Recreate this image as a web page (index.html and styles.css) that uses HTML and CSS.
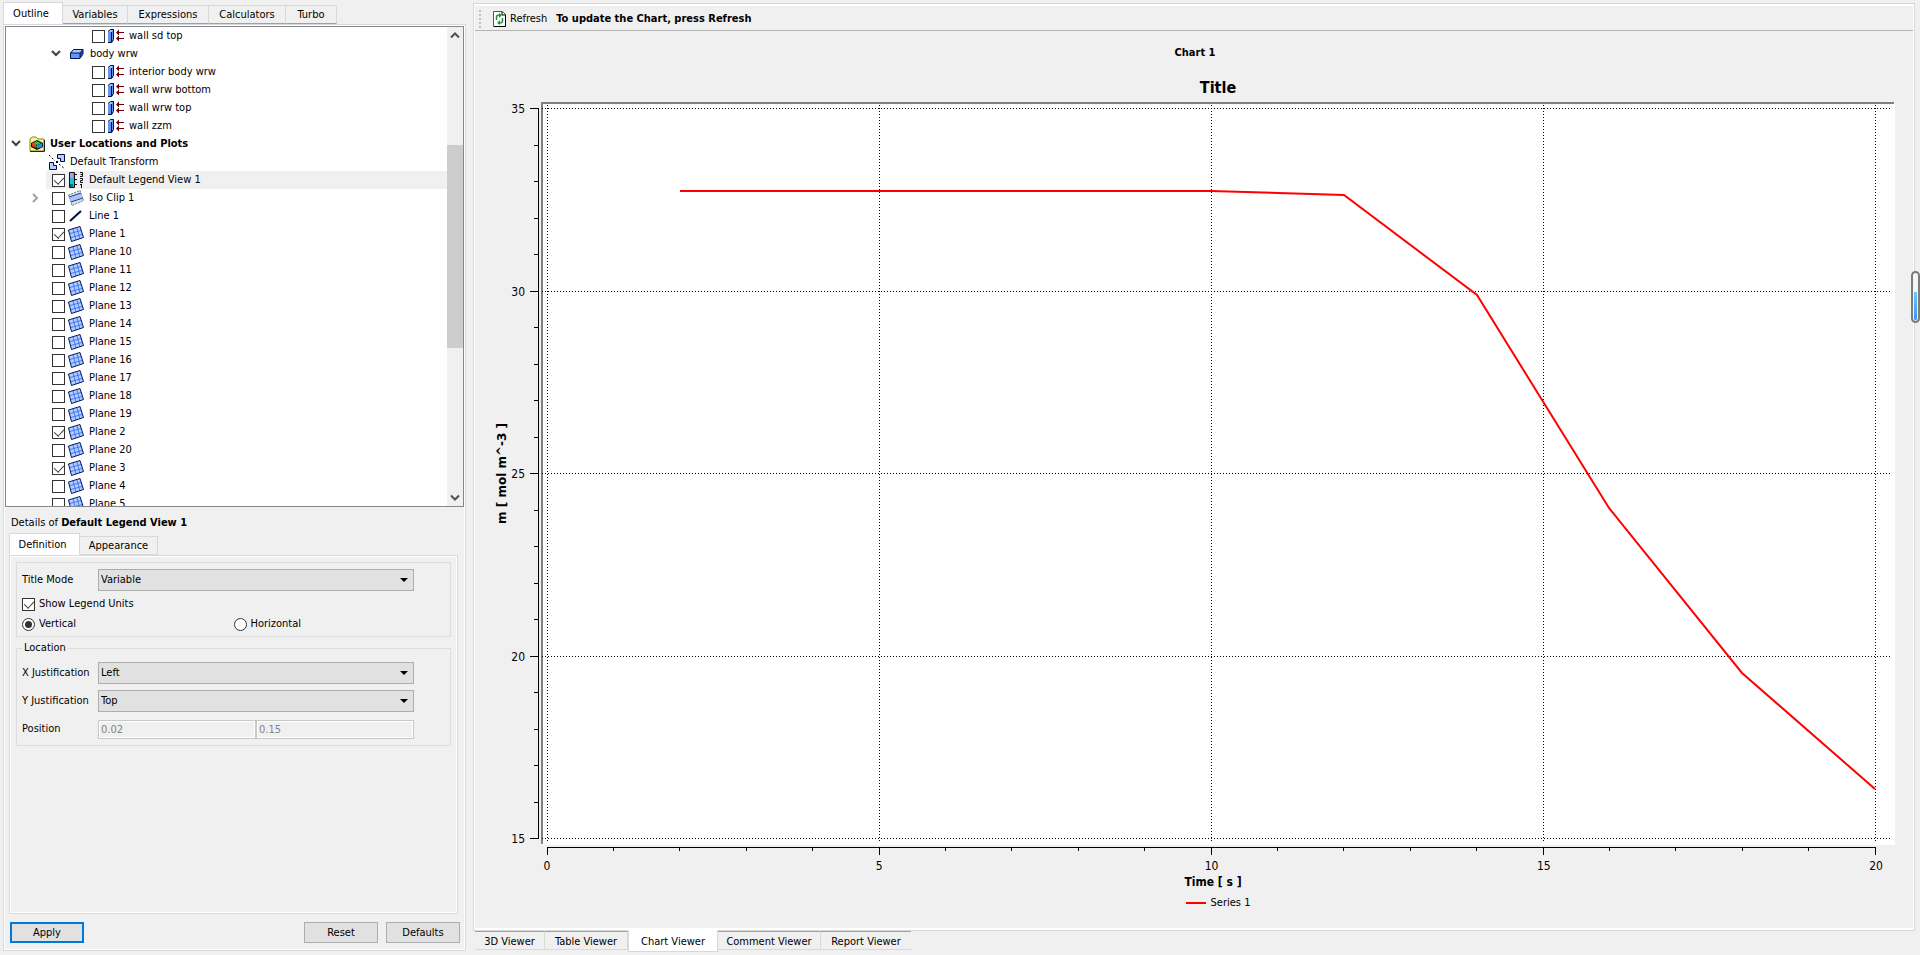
FILE: index.html
```
<!DOCTYPE html>
<html lang="en">
<head>
<meta charset="utf-8">
<title>Chart Viewer</title>
<link rel="stylesheet" href="styles.css">
</head>
<body>
<svg class="sprites" aria-hidden="true">
  <symbol id="chevron-down" viewBox="0 0 20 18"><path d="M6 6l4 4 4-4" fill="none" stroke="#404040" stroke-width="2"/></symbol>
  <symbol id="chevron-right" viewBox="0 0 20 18"><path d="M7 5l4 4-4 4" fill="none" stroke="#a0a0a0" stroke-width="2"/></symbol>
  <symbol id="boundary" viewBox="0 0 16 16">
    <path d="M0 4L3 1h3v10l-2 4H0z" fill="#5f93f5"/><path d="M0 4L3 1h2L4 4z" fill="#9cc0ff"/>
    <path d="M0 3.500L2.500 1.500H5.500v10l-2 3H0M3.500 14V4" fill="none" stroke="#001038"/>
    <path d="M9 4.500h7M9 10.500h7" stroke="#6b0008"/><path d="M8 4.500l3-3v6zM8 10.500l3-3v6z" fill="#6b0008"/>
  </symbol>
  <symbol id="body" viewBox="0 0 16 16">
    <path d="M1 7l4-4h9v5l-3 4H1z" fill="#6495ff"/><path d="M1 7l4-4h9l-3 4z" fill="#a9c6ff"/><path d="M11 7l3-4v5l-3 4z" fill="#2850b8"/>
    <path d="M1.500 7l3-3.500h9.500V8l-3 4.500H1.500zM1.500 7H11v5M11 7l3-3.500" fill="none" stroke="#001850"/>
  </symbol>
  <symbol id="folder" viewBox="0 0 16 16">
    <path d="M1 15V3l2-2h4l2 2h6v12z" fill="#f7f29a" stroke="#8b8500"/><path d="M1 15.500h14.500V4" fill="none" stroke="#222" />
    <path d="M2 7l6-3 6 3v4l-6 3-6-3z" fill="#111"/><path d="M3 7l4-1v6l-4-2z" fill="#f03820"/><path d="M7 5l5 2-3 2-4-1z" fill="#20c850"/><path d="M9 9l4-2v4l-4 1z" fill="#1890f0"/><path d="M7 10l2-1v4z" fill="#20c850"/>
  </symbol>
  <symbol id="transform" viewBox="0 0 16 16">
    <path d="M.5 8.500h4v3h3v4h-7zM8.500 .5h7v7h-4v-3h-3z" fill="#b8cdfd" stroke="#000c40"/>
    <path d="M0 1l6 6M10 10l6 5" fill="none" stroke="#000" stroke-dasharray="2 2"/><path d="M7 7h2v2H7z" fill="#000"/>
  </symbol>
  <symbol id="legend" viewBox="0 0 16 16">
    <path d="M1.500 .5h5v15h-5z" fill="#18c4d2" stroke="#111"/><path d="M2 1h3v5H2z" fill="#b4a0d8"/><path d="M2 12h3v3H2z" fill="#087080"/>
    <path d="M7 2.500h2M7 7.500h2M7 12.500h2" stroke="#111"/>
    <path d="M12 .5h2.500v4H12M12.500 2.500h2M12 6.500h2.500v2h-2v2H15M13.500 12v4M12 12.500h1" fill="none" stroke="#111"/>
  </symbol>
  <symbol id="isoclip" viewBox="0 0 16 16">
    <path d="M.5 5L12 .5l3.500 10L4 15.500z" fill="#d5e0f3" stroke="#778" stroke-dasharray="2 1"/>
    <path d="M1 7l12-4 2 5L3 12z" fill="#a8c4fa"/><path d="M1 7L13 3M3 12l12-4" stroke="#203f85"/>
  </symbol>
  <symbol id="line" viewBox="0 0 16 16"><path d="M2 13L13 3" stroke="#001038" stroke-width="2"/></symbol>
  <symbol id="plane" viewBox="0 0 16 16">
    <path d="M.5 4L12 .5l3.500 11L3.500 15.500z" fill="#b3cbff"/>
    <path d="M2 7.500l11-3M3 11.500l11-3M5 3l3 11M9 2l3 11" fill="none" stroke="#417bf5"/>
    <path d="M.5 4L12 .5l3.500 11L3.500 15.500z" fill="none" stroke="#001860"/>
  </symbol>
  <symbol id="refresh" viewBox="0 0 14 16">
    <path d="M.5 .5h9l3 3v12H.5z" fill="#fff" stroke="#555"/><path d="M9 1v3h4M12.500 4v11.500H1" fill="none" stroke="#000"/>
    <path d="M3.500 9V6q0-2 3-2M9.500 7v3q0 2-3 2" fill="none" stroke="#1b9440" stroke-width="1.500"/><path d="M6 2l3 2-3 3zM7 9l-3 3 3 2z" fill="#1b9440"/>
  </symbol>
</svg>

<main class="window">
  <section class="side">
    <nav class="tabs">
      <button class="tab active">Outline</button><button class="tab">Variables</button><button class="tab">Expressions</button><button class="tab">Calculators</button><button class="tab">Turbo</button>
    </nav>
    <div class="side-pane">
      <div class="tree">
        <div class="tree-rows" id="tree"></div>
        <div class="scrollbar">
          <svg class="arrow" viewBox="0 0 16 16"><path d="M4 10l4-4 4 4" fill="none" stroke="#505050" stroke-width="2"/></svg>
          <div class="track"><div class="before"></div><div class="thumb"></div><div class="after"></div></div>
          <svg class="arrow" viewBox="0 0 16 16"><path d="M4 6l4 4 4-4" fill="none" stroke="#505050" stroke-width="2"/></svg>
        </div>
      </div>
      <div class="details">
        <h2 class="details-title">Details of <b>Default Legend View 1</b></h2>
        <nav class="tabs sub">
          <button class="tab active">Definition</button><button class="tab">Appearance</button>
        </nav>
        <form class="details-pane">
          <fieldset class="group">
            <div class="field"><label for="mode">Title Mode</label><span class="combo"><select id="mode"><option>Variable</option></select></span></div>
            <label class="option"><input type="checkbox" checked>Show Legend Units</label>
            <div class="radios">
              <label class="option"><input type="radio" name="dir" checked>Vertical</label>
              <label class="option"><input type="radio" name="dir">Horizontal</label>
            </div>
          </fieldset>
          <fieldset class="group location">
            <legend>Location</legend>
            <div class="field"><label for="xj">X Justification</label><span class="combo"><select id="xj"><option>Left</option></select></span></div>
            <div class="field"><label for="yj">Y Justification</label><span class="combo"><select id="yj"><option>Top</option></select></span></div>
            <div class="field"><label for="px">Position</label><span class="pair"><input id="px" type="text" value="0.02" disabled><input type="text" value="0.15" aria-label="Position Y" disabled></span></div>
          </fieldset>
        </form>
        <div class="buttons">
          <button class="btn primary">Apply</button><span class="spacer"></span><button class="btn">Reset</button><button class="btn">Defaults</button>
        </div>
      </div>
    </div>
  </section>

  <section class="viewer">
    <div class="viewer-pane">
      <header class="toolbar">
        <span class="grip"></span>
        <button class="refresh"><svg><use href="#refresh"/></svg>Refresh</button>
        <b>To update the Chart, press Refresh</b>
      </header>
      <div class="chart">
        <h1 class="chart-name">Chart 1</h1>
        <h2 class="chart-title">Title</h2>
        <div class="y-title"><span>m [ mol m^-3 ]</span></div>
        <div class="y-labels"><span>35</span><span>30</span><span>25</span><span>20</span><span>15</span></div>
        <svg class="plot" viewBox="0 0 1370 756" preserveAspectRatio="none" id="plot">
          <rect x="13" y="1" width="1354" height="742" fill="#fff"/>
          <path d="M13 1H1366M14 1V742" class="frame"/>
          <path d="M14 6.500H1363M14 189.500H1363M14 371.500H1363M14 554.500H1363M14 736.500H1363M19.500 3V739M351.500 3V739M683.500 3V739M1015.500 3V739M1347.500 3V739" class="grid"/>
          <path id="axes" class="axis"/>
          <polyline class="series" points="152,89 683,89 816,93 949,193 1081,406 1214,571 1347,687"/>
        </svg>
        <div class="x-labels"><span>0</span><span>5</span><span>10</span><span>15</span><span>20</span></div>
        <div class="x-title">Time [ s ]</div>
        <div class="key"><i></i>Series 1</div>
      </div>
    </div>
    <nav class="tabs bottom">
      <button class="tab">3D Viewer</button><button class="tab">Table Viewer</button><button class="tab active">Chart Viewer</button><button class="tab">Comment Viewer</button><button class="tab">Report Viewer</button>
    </nav>
    <div class="gauge"></div>
  </section>
</main>
<script src="app.js"></script>
</body>
</html>
```

FILE: styles.css
```
* { box-sizing: border-box; }
body {
  margin: 0;
  height: 100vh;
  overflow: hidden;
  background: #f0f0f0;
  color: #000;
  font: 11px/14px "DejaVu Sans Condensed", "DejaVu Sans", sans-serif;
}
button, input, select { font: inherit; color: inherit; margin: 0; }
h1, h2 { margin: 0; font-size: 11px; }
.sprites { display: none; }
.window {
  display: grid;
  grid-template-columns: 463px minmax(0, 1fr);
  gap: 7px;
  height: 100vh;
  padding: 3px 4px 4px 3px;
}

/* tabs */
.tabs { display: flex; align-items: flex-end; position: relative; z-index: 1; }
.tab {
  height: 19px;
  padding: 1px 0 0;
  border: 1px solid #d9d9d9;
  border-left: 0;
  border-bottom-color: #a0a0a0;
  background: #f0f0f0;
  white-space: nowrap;
}
.tab.active {
  height: 22px;
  padding: 1px 4px 0 0;
  border-left: 1px solid #d9d9d9;
  border-bottom-color: #fff;
  background: #fff;
}

/* left side */
.side { display: flex; flex-direction: column; min-height: 0; }
.side > .tabs { height: 21px; }
.side > .tabs .tab:nth-child(1) { width: 60px; }
.side > .tabs .tab:nth-child(2) { width: 65px; }
.side > .tabs .tab:nth-child(3) { width: 81px; }
.side > .tabs .tab:nth-child(4) { width: 77px; }
.side > .tabs .tab:nth-child(5) { width: 51px; }
.side-pane {
  flex: 1;
  min-height: 0;
  display: grid;
  grid-template-rows: minmax(0, 482fr) minmax(0, 442fr);
  border: 1px solid #d9d9d9;
  box-shadow: inset 0 0 0 1px #fff;
  padding: 1px;
}
.tree { display: flex; border: 1px solid #828790; background: #fff; overflow: hidden; }
.tree-rows { flex: 1; min-width: 0; }
.row { display: flex; align-items: center; height: 18px; padding-left: 0; }
.row.l1 { padding-left: 20px; }
.row.l2 { padding-left: 40px; }
.row.l3 { padding-left: 60px; }
.row .chev { width: 20px; height: 18px; flex: none; }
.row .item { display: flex; align-items: center; flex: 1; height: 18px; padding-left: 3px; }
.row .item.check { padding-left: 6px; }
.row .item label { display: flex; align-items: center; }
.row input { margin-right: 3px; }
.row .icon { width: 16px; height: 16px; margin-right: 5px; flex: none; }
.row.selected .item { background: #f0f0f0; }
.row.root { font-weight: bold; }
.scrollbar { width: 16px; display: flex; flex-direction: column; background: #f0f0f0; }
.scrollbar .arrow { width: 16px; height: 17px; }
.track { flex: 1; display: flex; flex-direction: column; }
.before { flex: 101; }
.thumb { flex: 203; background: #cdcdcd; }
.after { flex: 142; }

input[type="checkbox"], input[type="radio"] {
  appearance: none;
  position: relative;
  flex: none;
  width: 13px;
  height: 13px;
  border: 1px solid #333;
  background: #fff;
}
input[type="radio"] { border-radius: 50%; }
input[type="checkbox"]:checked::before {
  content: "";
  position: absolute;
  left: 3px;
  top: 0;
  width: 5px;
  height: 8px;
  border: solid #404040;
  border-width: 0 1px 1px 0;
  transform: rotate(42deg);
}
input[type="radio"]:checked::before {
  content: "";
  position: absolute;
  inset: 2px;
  border-radius: 50%;
  background: #333;
}

/* details */
.details { display: flex; flex-direction: column; min-height: 0; padding: 9px 4px 6px; }
.details-title { padding-left: 2px; font-weight: normal; }
.sub { margin-top: 4px; height: 21px; }
.sub .tab { width: 78px; border-bottom-color: #d9d9d9; }
.sub .tab.active { width: 71px; border-bottom-color: #fff; }
.details-pane {
  flex: 1;
  border: 1px solid #d9d9d9;
  box-shadow: inset 0 0 0 1px #fff;
  padding: 6px;
  margin-right: 2px;
}
.group { display: flex; flex-direction: column; margin: 0; padding: 6px 5px 5px; border: 1px solid #dcdcdc; min-width: 0; }
.group.location { margin-top: 4px; padding: 7px 5px 5px; gap: 6px; }
legend { margin-left: 0; padding: 0 2px; }
.field { display: grid; grid-template-columns: 76px minmax(0, 316px); align-items: center; height: 22px; }
.combo { position: relative; display: block; }
.combo::after {
  content: "";
  position: absolute;
  right: 6px;
  top: 9px;
  border: 4px solid transparent;
  border-top-color: #000;
  border-bottom: 0;
}
select { appearance: none; display: block; width: 100%; height: 22px; padding: 0 2px; border: 1px solid #adadad; border-radius: 0; background: #e1e1e1; }
.pair { display: flex; }
.pair input { width: 50%; height: 19px; padding: 0 2px; border: 1px solid #c8c8c8; box-shadow: inset 0 0 0 1px #fff; background: #f0f0f0; color: #838383; }
.option { display: flex; align-items: center; gap: 4px; height: 14px; }
.group > .option { margin-top: 6px; }
.radios { display: grid; grid-template-columns: 1fr 1fr; margin: 6px 0 0; }
.buttons { display: flex; gap: 8px; padding: 8px 0 0 1px; }
.spacer { flex: 1; }
.btn { width: 74px; height: 21px; padding: 0; border: 1px solid #adadad; background: #e1e1e1; }
.btn.primary { border: 2px solid #0078d7; }

/* viewer */
.viewer { position: relative; display: flex; flex-direction: column; min-width: 0; min-height: 0; }
.viewer-pane {
  flex: 1;
  min-height: 0;
  display: flex;
  flex-direction: column;
  margin-right: 1px;
  border: 1px solid #d9d9d9;
  box-shadow: inset 0 0 0 2px #fff;
  padding: 2px 1px;
}
.toolbar { display: flex; align-items: center; height: 25px; border-bottom: 1px solid #b4b4b4; background: #f0f0f0; padding: 1px 0 0 4px; }
.grip { width: 2px; height: 18px; margin-right: 12px; background: repeating-linear-gradient(#c0c0c0 0 2px, transparent 2px 4px); }
.refresh { display: flex; align-items: center; gap: 3px; padding: 0; border: 0; background: none; margin-right: 9px; }
.refresh svg { width: 14px; height: 16px; }
.chart {
  flex: 1;
  min-height: 0;
  display: grid;
  grid-template-columns: 35px 18px minmax(0, 1fr) 15px;
  grid-template-rows: 40px 31px minmax(0, 1fr) 17px 18px 20px 15px;
  background: #f0f0f0;
}
.chart-name { grid-area: 1 / 1 / 2 / 5; text-align: center; padding: 15px 0 0 2px; }
.chart-title { grid-area: 2 / 3; padding-left: 10px; text-align: center; font-size: 16px; line-height: 34px; }
.y-title { grid-area: 3 / 1; display: flex; align-items: center; justify-content: flex-end; padding: 0 1px 14px 0; font: bold 12px/14px "DejaVu Sans", sans-serif; }
.y-title span { writing-mode: vertical-rl; transform: rotate(180deg); white-space: nowrap; }
.y-labels { grid-area: 3 / 2; display: flex; flex-direction: column; justify-content: space-between; padding: 0 3px 12px 0; font-size: 12px; text-align: right; }
.plot { grid-area: 3 / 3; display: block; width: 100%; height: 100%; }
.plot path, .plot polyline { fill: none; vector-effect: non-scaling-stroke; }
.plot .frame { stroke: #808080; stroke-width: 2px; }
.plot .grid { stroke: #000; stroke-width: 1px; stroke-dasharray: 1 2; }
.plot .axis { stroke: #000; stroke-width: 1px; }
.plot .series { stroke: #f00; stroke-width: 2px; }
.x-labels { grid-area: 4 / 3; display: flex; justify-content: space-between; margin: 0 7px 0 4px; font-size: 12px; line-height: 16px; }
.x-labels span { width: 30px; text-align: center; }
.x-title { grid-area: 5 / 3; text-align: center; font-size: 12px; font-weight: bold; }
.key { grid-area: 6 / 1 / 7 / 5; display: flex; align-items: center; justify-content: center; gap: 5px; padding-left: 48px; }
.key i { width: 20px; height: 2px; background: #f00; }
.bottom { align-items: flex-start; height: 20px; margin-left: 2px; }
.bottom .tab { height: 19px; padding: 2px 0 0; border-color: #a0a0a0 #d9d9d9 #d9d9d9; }
.bottom .tab.active { height: 22px; margin-top: -1px; padding: 2px 0 0; border-color: #fff #d9d9d9 #d9d9d9; }
.bottom .tab:nth-child(1) { width: 70px; }
.bottom .tab:nth-child(2) { width: 83px; }
.bottom .tab:nth-child(3) { width: 90px; }
.bottom .tab:nth-child(4) { width: 103px; }
.bottom .tab:nth-child(5) { width: 90px; border-right: 0; }
.gauge {
  position: absolute;
  right: -4px;
  top: 268px;
  width: 9px;
  height: 52px;
  border: 2px solid #7b7b7b;
  border-radius: 5px;
  background: linear-gradient(#f6f4f4 0 40%, #70c8fb 40%, #3b8cf8);
  box-shadow: inset 0 0 0 1px #f4f4f4;
}
```

FILE: app.js
```
const rows = [
  [3, "wall sd top", "boundary", { check: false }],
  [2, "body wrw", "body", { chev: "down" }],
  [3, "interior body wrw", "boundary", { check: false }],
  [3, "wall wrw bottom", "boundary", { check: false }],
  [3, "wall wrw top", "boundary", { check: false }],
  [3, "wall zzm", "boundary", { check: false }],
  [0, "User Locations and Plots", "folder", { chev: "down", cls: "root" }],
  [1, "Default Transform", "transform", {}],
  [1, "Default Legend View 1", "legend", { check: true, cls: "selected" }],
  [1, "Iso Clip 1", "isoclip", { check: false, chev: "right" }],
  [1, "Line 1", "line", { check: false }],
];
const planes = [1, 10, 11, 12, 13, 14, 15, 16, 17, 18, 19, 2, 20, 3, 4, 5];
for (const n of planes) {
  rows.push([1, "Plane " + n, "plane", { check: n < 4 }]);
}
document.getElementById("tree").innerHTML = rows.map(([level, text, icon, o]) => {
  const chev = `<svg class="chev">${o.chev ? `<use href="#chevron-${o.chev}"/>` : ""}</svg>`;
  const pic = `<svg class="icon"><use href="#${icon}"/></svg>`;
  const hasCheck = "check" in o;
  const body = hasCheck
    ? `<label><input type="checkbox"${o.check ? " checked" : ""}>${pic}${text}</label>`
    : `${pic}<span>${text}</span>`;
  return `<div class="row l${level} ${o.cls || ""}">${chev}<div class="item${hasCheck ? " check" : ""}">${body}</div></div>`;
}).join("");

/* Axis lines, then the minor ticks and the longer major ones. */
let d = "M10.5 6V737M19 745.5H1348";
for (let i = 0; i <= 20; i++) {
  const y = Math.round(6 + i * 36.5) + 0.5;
  d += `M${i % 5 ? 6 : 2} ${y}H10`;
}
for (let i = 0; i <= 4; i++) {
  d += `M${19.5 + i * 332} 745V753`;
}
for (let i = 0; i < 20; i++) {
  d += `M${Math.floor(19 + i * 66.4) + 0.5} 745V749`;
}
document.getElementById("axes").setAttribute("d", d);
```
